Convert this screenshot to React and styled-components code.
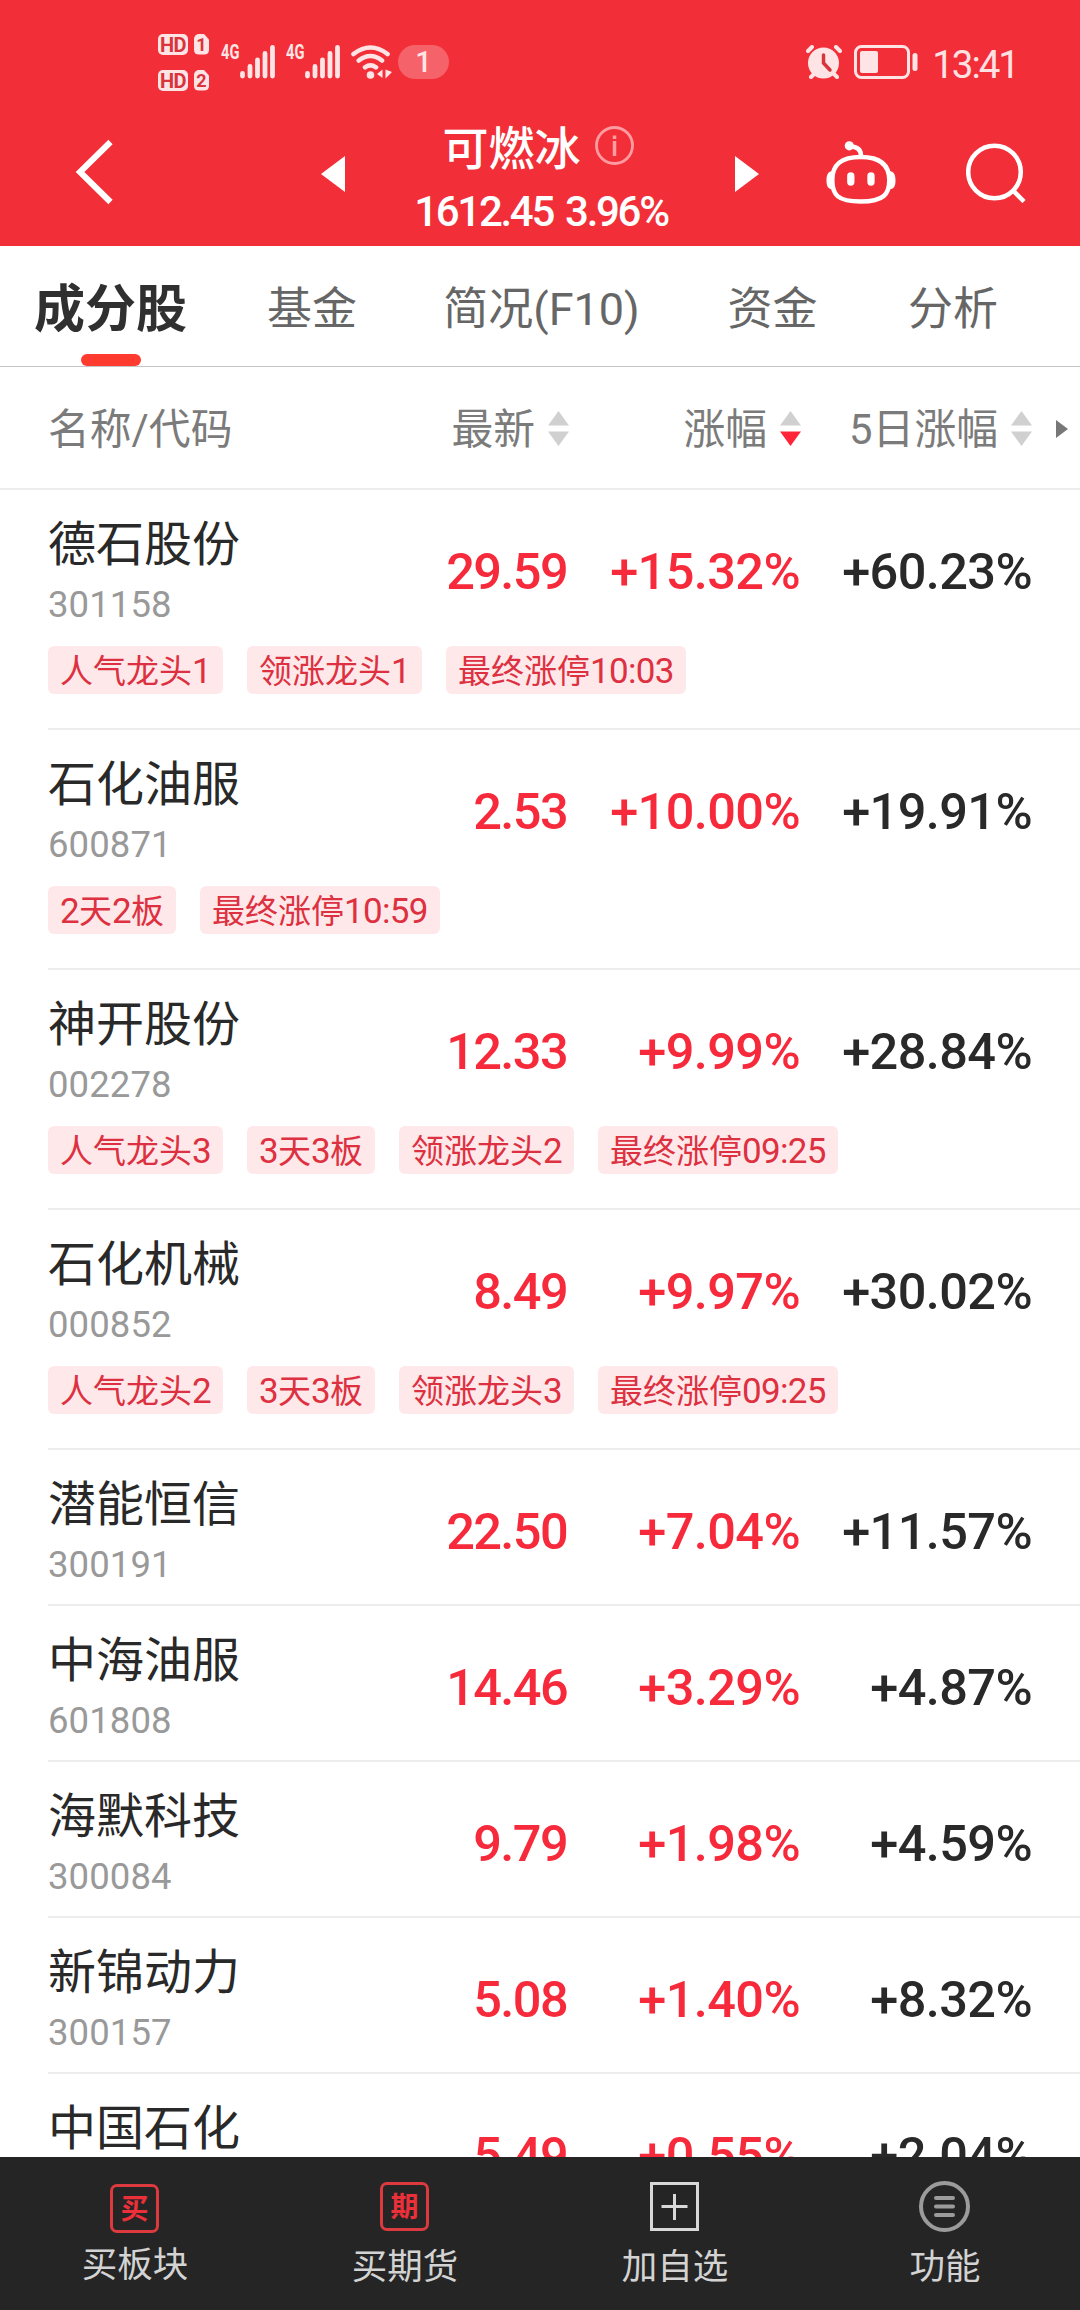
import React from 'react';
import styled, { createGlobalStyle } from 'styled-components';

const RED = '#f22f38';
const UP = '#f62a3b';

const GlobalStyle = createGlobalStyle`
  body {
    margin: 0;
    background: #fff;
    font-family: Roboto, "Noto Sans CJK SC", sans-serif;
  }
  * { box-sizing: border-box; }
  svg { display: block; flex: none; }
`;

const Screen = styled.div`
  display: flex;
  flex-direction: column;
  width: 1080px;
  height: 2310px;
  overflow: hidden;
  background: #fff;
`;

const Header = styled.header`
  flex: none;
  height: 246px;
  background: ${RED};
  color: #fff;
`;

/* status bar */

const StatusBar = styled.div`
  display: flex;
  justify-content: space-between;
  height: 124px;
  padding: 0 62px 0 158px;
`;

const StatusGroup = styled.div`
  display: flex;
  align-items: center;
  height: 124px;
`;

const HdBadges = styled.div`
  display: grid;
  grid-template-columns: 30px 15px;
  gap: 15px 6px;
  margin-right: 12px;
`;

const HdBadge = styled.span`
  height: 21px;
  border-radius: 5px;
  background: #ffe4e6;
  color: #d8343c;
  font: 700 20px/22px Roboto, sans-serif;
  letter-spacing: -0.5px;
  text-align: center;
`;

const SimBadge = styled(HdBadge)`
  clip-path: polygon(0 0, 64% 0, 100% 28%, 100% 100%, 0 100%);
  letter-spacing: 0;
  font-size: 18px;
`;

const Network = styled.div`
  display: flex;
  align-items: flex-start;
  height: 34px;
  margin-right: 11px;
`;

const NetworkType = styled.span`
  width: 19px;
  height: 15px;
  color: #ffe4e6;
  font: 700 21px/15px Roboto, sans-serif;
  white-space: nowrap;

  span {
    display: inline-block;
    transform: scaleX(0.7);
    transform-origin: left;
  }
`;

const Notice = styled.span`
  width: 51px;
  height: 34px;
  margin-left: 6px;
  border-radius: 17px;
  background: #f66269;
  color: #ffe4e6;
  font: 500 29px/35px Roboto, sans-serif;
  text-align: center;
`;

const Clock = styled.span`
  margin-left: 14px;
  padding-top: 4px;
  color: #ffe1e3;
  font-size: 38.5px;
  letter-spacing: -2px;
`;

/* title bar */

const TitleBar = styled.div`
  display: grid;
  grid-template-columns: 321px 24px 390px 24px 67px 70px 70px;
  height: 122px;
`;

const IconCell = styled.div`
  padding-top: ${p => p.$top}px;
  padding-left: ${p => p.$left || 0}px;
`;

const TitleBlock = styled.div`
  display: flex;
  flex-direction: column;
  align-items: center;
`;

const Title = styled.div`
  display: flex;
  align-items: center;
  gap: 14px;
  height: 42px;
  padding-right: 4px;
  font: 500 46px/46px "Noto Sans CJK SC", sans-serif;
`;

const IndexQuote = styled.div`
  margin-top: 21px;
  padding-left: 2px;
  font-weight: 500;
  font-size: 42px;
  line-height: 50px;
  letter-spacing: -2.3px;
  word-spacing: 4px;
`;

/* tabs */

const Tabs = styled.nav`
  flex: none;
  display: grid;
  grid-template-columns: 221px 182px 277px 185px 176px;
  height: 121px;
  border-bottom: 1px solid #c4c4c4;
`;

const Tab = styled.div`
  display: flex;
  flex-direction: column;
  align-items: center;
  justify-content: space-between;
  padding-top: 26px;
  color: ${p => (p.$active ? '#303030' : '#666')};
  font-weight: ${p => (p.$active ? 700 : 400)};
  font-size: ${p => (p.$active ? 51 : 45)}px;
  line-height: 76px;
  white-space: nowrap;

  &::after {
    content: "";
    width: 60px;
    height: 12px;
    border-radius: 6px;
    background: ${p => (p.$active ? '#ff3b30' : 'transparent')};
  }
`;

/* stock table */

const TableHead = styled.div`
  flex: none;
  display: grid;
  grid-template-columns: 521px 232px 231px 1fr;
  align-items: center;
  height: 123px;
  padding-left: 48px;
  border-bottom: 2px solid #ededed;
  color: #7b7b7b;
  font-size: 41.8px;
  line-height: 60px;
`;

const HeadName = styled.div`
  display: flex;
  justify-content: space-between;
`;

const HeadCell = styled.div`
  display: flex;
  align-items: center;
  justify-content: flex-end;
  gap: 13px;
  white-space: nowrap;
`;

const HeadText = styled.span`
  padding-top: 4px;
`;

const List = styled.main`
  flex: 1;
  min-height: 0;
  overflow: hidden;
  padding-left: 48px;
`;

const Row = styled.section`
  height: ${p => (p.$tagged ? 240 : 156)}px;
  border-bottom: 2px solid #ececec;
`;

const Quote = styled.div`
  display: grid;
  grid-template-columns: 289px 232px 231px 232px;
  height: 156px;
`;

const Name = styled.div`
  padding-top: 20px;
  color: #292929;
  font-size: 48px;
  line-height: 70px;
`;

const Code = styled.div`
  color: #999;
  font-size: 36.5px;
  line-height: 44px;
  letter-spacing: 0.1px;
  margin-top: 3px;
`;

const Value = styled.div`
  padding-top: 52px;
  padding-right: ${p => (p.$price ? 2 : 0)}px;
  color: ${p => (p.$plain ? '#292929' : UP)};
  font-weight: 500;
  font-size: 50.5px;
  line-height: 60px;
  letter-spacing: ${p => (p.$price ? -1.6 : -0.6)}px;
  text-align: right;
`;

const Tags = styled.div`
  display: flex;
  gap: 24px;
`;

const Tag = styled.span`
  height: 48px;
  padding: 0 12px;
  border-radius: 6px;
  background: #ffe8ea;
  color: #dd3040;
  font-size: 33px;
  line-height: 51px;
  white-space: nowrap;
`;

const TagNumber = styled.span`
  font-size: 35px;
  letter-spacing: -0.7px;
`;

/* bottom bar */

const BottomBar = styled.footer`
  flex: none;
  display: grid;
  grid-template-columns: repeat(4, 1fr);
  height: 153px;
  background: #252525;
`;

const Action = styled.div`
  display: flex;
  flex-direction: column;
  align-items: center;
  padding-top: ${p => p.$top}px;
  color: #d3d3d3;
  font-size: 35.5px;
`;

const ActionIcon = styled.div`
  display: grid;
  place-items: center;
  height: 51px;
  padding-right: 1px;
`;

const CharIcon = styled.span`
  display: block;
  width: 49px;
  height: 49px;
  border: 3.5px solid #dc3a3e;
  border-radius: 7px;
  color: #ec303a;
  font: 700 28px/41px "Noto Sans CJK SC", sans-serif;
  text-align: center;
`;

const ActionLabel = styled.span`
  line-height: 52px;
  margin-top: ${p => p.$gap}px;
`;

function Signal() {
  return (
    <svg width="35" height="34" viewBox="0 0 35 34" stroke="#ffe4e6" strokeWidth="4.800" strokeLinecap="round">
      <path d="M2.500 28.500v2.500M10 21.500v9.500M17.500 15v16M25 8.500v22.500M32.500 2.500v28.500" />
    </svg>
  );
}

function Wifi() {
  return (
    <svg width="41" height="34" viewBox="0 0 41 34" fill="none" stroke="#ffe4e6" strokeWidth="4.600" strokeLinecap="round">
      <path d="M2.500 9Q19.500 -4 36.500 9M7.800 15.500Q19.500 6.500 31 15.500M14 22.300Q19.500 18.500 25 22.300" />
      <circle cx="19.500" cy="30" r="3.800" fill="#ffe4e6" stroke="none" />
      <path d="M31.500 24.500v8.500l-5.500-4zM34.500 24.500v9l6.500-6.500z" fill="#ffe4e6" stroke="none" />
    </svg>
  );
}

function Alarm() {
  return (
    <svg width="36" height="34" viewBox="0 0 36 34" fill="none" strokeLinecap="round">
      <circle cx="17.500" cy="18" r="15.500" fill="#ffe4e6" />
      <path d="M2 6l4-4M30 2l4 4M5 32l3-3M31 32l-3-3" stroke="#ffe4e6" strokeWidth="4" />
      <path d="M17.500 10v8l6.500 7" stroke="#d8343c" strokeWidth="3.500" />
    </svg>
  );
}

function Battery() {
  return (
    <svg width="64" height="34" viewBox="0 0 64 34" fill="none">
      <rect x="1.500" y="1.500" width="53" height="31" rx="6" stroke="#ffe4e6" strokeWidth="3" />
      <rect x="6" y="6" width="18" height="22" rx="2" fill="#ffe4e6" />
      <rect x="58.500" y="8" width="5" height="18" rx="2.500" fill="#ffe4e6" />
    </svg>
  );
}

function Sort({ down }) {
  return (
    <svg width="21" height="36" viewBox="0 0 21 36">
      <path d="M10.500 1L21 15.500H0z" fill="#d0d0d0" />
      <path d="M10.500 36L21 21.500H0z" fill={down ? '#ff2438' : '#d0d0d0'} />
    </svg>
  );
}

function Robot() {
  return (
    <svg width="71" height="64" viewBox="0 0 71 64" fill="none" stroke="#fff">
      <path d="M34.800 16C55 16 63.300 25 63.300 39S58 60.500 34.800 60.500 6.300 54 6.300 39s8.300-23 28.500-23z" strokeWidth="4.500" />
      <path d="M35 15c0-6-3-9.500-11-9.500" strokeWidth="4.500" />
      <circle cx="23.300" cy="4.800" r="4.600" fill="#fff" stroke="none" />
      <path d="M7 30c-5 0-6.500 4-6.500 9.500s1.500 9 6.500 9zM63 30c5 0 6.500 4 6.500 9.500s-1.500 9-6.500 9z" fill="#fff" stroke="none" />
      <path d="M24.800 35v6M45 35v6" strokeWidth="7.300" strokeLinecap="round" />
    </svg>
  );
}

const tabs = ['成分股', '基金', '简况(F10)', '资金', '分析'];

const stocks = [
  { name: '德石股份', code: '301158', price: '29.59', change: '+15.32%', five: '+60.23%', tags: ['人气龙头1', '领涨龙头1', '最终涨停10:03'] },
  { name: '石化油服', code: '600871', price: '2.53', change: '+10.00%', five: '+19.91%', tags: ['2天2板', '最终涨停10:59'] },
  { name: '神开股份', code: '002278', price: '12.33', change: '+9.99%', five: '+28.84%', tags: ['人气龙头3', '3天3板', '领涨龙头2', '最终涨停09:25'] },
  { name: '石化机械', code: '000852', price: '8.49', change: '+9.97%', five: '+30.02%', tags: ['人气龙头2', '3天3板', '领涨龙头3', '最终涨停09:25'] },
  { name: '潜能恒信', code: '300191', price: '22.50', change: '+7.04%', five: '+11.57%' },
  { name: '中海油服', code: '601808', price: '14.46', change: '+3.29%', five: '+4.87%' },
  { name: '海默科技', code: '300084', price: '9.79', change: '+1.98%', five: '+4.59%' },
  { name: '新锦动力', code: '300157', price: '5.08', change: '+1.40%', five: '+8.32%' },
  { name: '中国石化', price: '5.49', change: '+0.55%', five: '+2.04%' },
];

// digits run slightly larger than the characters around them
function TagText({ text }) {
  return text.split(/([\d:]+)/).filter(Boolean).map((part, i) => (
    /\d/.test(part) ? <TagNumber key={i}>{part}</TagNumber> : part
  ));
}

function StockRow({ stock }) {
  return (
    <Row $tagged={!!stock.tags}>
      <Quote>
        <div>
          <Name>{stock.name}</Name>
          {stock.code && <Code>{stock.code}</Code>}
        </div>
        <Value $price>{stock.price}</Value>
        <Value>{stock.change}</Value>
        <Value $plain>{stock.five}</Value>
      </Quote>
      {stock.tags && (
        <Tags>
          {stock.tags.map(tag => <Tag key={tag}><TagText text={tag} /></Tag>)}
        </Tags>
      )}
    </Row>
  );
}

function App() {
  return (
    <Screen>
      <GlobalStyle />
      <Header>
        <StatusBar>
          <StatusGroup>
            <HdBadges>
              <HdBadge>HD</HdBadge><SimBadge>1</SimBadge>
              <HdBadge>HD</HdBadge><SimBadge>2</SimBadge>
            </HdBadges>
            <Network><NetworkType><span>4G</span></NetworkType><Signal /></Network>
            <Network><NetworkType><span>4G</span></NetworkType><Signal /></Network>
            <Wifi />
            <Notice>1</Notice>
          </StatusGroup>
          <StatusGroup>
            <Alarm />
            <IconCell $top={0} $left={12}><Battery /></IconCell>
            <Clock>13:41</Clock>
          </StatusGroup>
        </StatusBar>
        <TitleBar>
          <IconCell $top={15} $left={75}>
            <svg width="40" height="66" viewBox="0 0 40 66" fill="none" stroke="#fff" strokeWidth="6">
              <path d="M35.500 3L5 33l30.500 30" />
            </svg>
          </IconCell>
          <IconCell $top={32}>
            <svg width="24" height="36" viewBox="0 0 24 36"><path d="M24 0v36L0 18z" fill="#fff" /></svg>
          </IconCell>
          <TitleBlock>
            <Title>
              可燃冰
              <svg width="39" height="39" viewBox="0 0 39 39" fill="none" stroke="#ff9ca1" strokeWidth="2.800">
                <circle cx="19.500" cy="19.500" r="18" />
                <path d="M19.500 15v15M19.500 9.500v3.500" strokeWidth="3.500" />
              </svg>
            </Title>
            <IndexQuote>1612.45 3.96%</IndexQuote>
          </TitleBlock>
          <IconCell $top={32}>
            <svg width="24" height="36" viewBox="0 0 24 36"><path d="M0 0v36l24-18z" fill="#fff" /></svg>
          </IconCell>
          <span />
          <IconCell $top={17}><Robot /></IconCell>
          <IconCell $top={19} $left={70}>
            <svg width="60" height="60" viewBox="0 0 60 60" fill="none" stroke="#fff" strokeWidth="4.500">
              <circle cx="28.500" cy="29" r="26.300" />
              <path d="M47 47.500l11 11" />
            </svg>
          </IconCell>
        </TitleBar>
      </Header>

      <Tabs>
        {tabs.map((tab, i) => <Tab key={tab} $active={i === 0}>{tab}</Tab>)}
      </Tabs>

      <TableHead>
        <HeadName>
          <HeadText>名称/代码</HeadText>
          <HeadCell><HeadText>最新</HeadText><Sort /></HeadCell>
        </HeadName>
        <HeadCell><HeadText>涨幅</HeadText><Sort down /></HeadCell>
        <HeadCell><HeadText>5日涨幅</HeadText><Sort /></HeadCell>
        <IconCell $top={3} $left={24}>
          <svg width="12" height="18" viewBox="0 0 12 18"><path d="M0 0v18l12-9z" fill="#777" /></svg>
        </IconCell>
      </TableHead>

      <List>
        {stocks.map(stock => <StockRow key={stock.name} stock={stock} />)}
      </List>

      <BottomBar>
        <Action $top={26}>
          <ActionIcon><CharIcon>买</CharIcon></ActionIcon>
          <ActionLabel $gap={5}>买板块</ActionLabel>
        </Action>
        <Action $top={24}>
          <ActionIcon><CharIcon>期</CharIcon></ActionIcon>
          <ActionLabel $gap={9}>买期货</ActionLabel>
        </Action>
        <Action $top={24}>
          <ActionIcon>
            <svg width="49" height="49" viewBox="0 0 49 49" fill="none" stroke="#d8d8d8" strokeWidth="3">
              <path d="M1.500 1.500h46v46h-46zM24.500 12v26M11.500 24.500h26" />
            </svg>
          </ActionIcon>
          <ActionLabel $gap={9}>加自选</ActionLabel>
        </Action>
        <Action $top={24}>
          <ActionIcon>
            <svg width="51" height="51" viewBox="0 0 51 51" fill="none" stroke="#9b9b9b" strokeWidth="4">
              <circle cx="25.500" cy="25.500" r="23.500" />
              <path d="M17 17h17M17 25.500h17M17 34h17" strokeLinecap="round" />
            </svg>
          </ActionIcon>
          <ActionLabel $gap={9}>功能</ActionLabel>
        </Action>
      </BottomBar>
    </Screen>
  );
}

export default App;
